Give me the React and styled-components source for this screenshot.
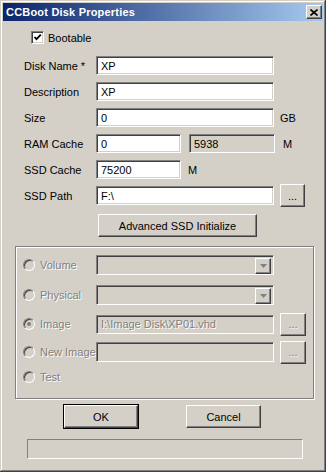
import React from 'react'
import styled, { createGlobalStyle, css } from 'styled-components'

const Global = createGlobalStyle`
  html, body { margin:0; padding:0; background:#d4d0c8; }
  body { font-family:"Liberation Sans", Arial, sans-serif; font-size:11px; color:#000; }
`

const raised = css`
  border:1px solid;
  border-color:#fff #404040 #404040 #fff;
  box-shadow:inset -1px -1px #808080, inset 1px 1px #d4d0c8;
`
const sunken = css`
  border:1px solid;
  border-color:#808080 #fff #fff #808080;
  box-shadow:inset 1px 1px #404040, inset -1px -1px #d4d0c8;
`
const disabledText = css`
  color:#808080;
  text-shadow:1px 1px #fff;
`

const Window = styled.div`
  width:326px;
  height:472px;
  box-sizing:border-box;
  background:#d4d0c8;
  box-shadow:inset -1px -1px #404040, inset 1px 1px #d4d0c8, inset -2px -2px #808080, inset 2px 2px #fff;
  display:flex;
  flex-direction:column;
  overflow:hidden;
`
const TitleBar = styled.div`
  margin:3px 3px 0;
  height:18px;
  background:linear-gradient(to right,#0a246a,#a6caf0);
  display:flex;
  align-items:center;
  justify-content:space-between;
  padding:0 1px 0 3px;
  h1{
    margin:0;
    color:#fff;
    font-size:11px;
    font-weight:bold;
    letter-spacing:0.2px;
  }
`
const CloseBtn = styled.div`
  ${raised};
  width:16px;
  height:14px;
  box-sizing:border-box;
  background:#d4d0c8;
  display:flex;
  align-items:center;
  justify-content:center;
`
const CheckRow = styled.div`
  margin:10px 0 0 31px;
  display:flex;
  align-items:center;
  gap:4px;
  height:13px;
`
const CheckBox = styled.span`
  ${sunken};
  width:13px;
  height:13px;
  box-sizing:border-box;
  background:#fff;
  display:flex;
  align-items:center;
  justify-content:center;
`
const Form = styled.div`
  margin-top:12px;
  display:flex;
  flex-direction:column;
  gap:7px;
`
const Row = styled.div`
  display:flex;
  align-items:center;
  height:19px;
  padding-left:${p => p.$indent || 24}px;
  margin-top:${p => p.$top || 0}px;
`
const Label = styled.span`
  width:${p => p.$w || 72}px;
  flex:none;
  ${p => p.$disabled && disabledText};
`
const Field = styled.div`
  ${sunken};
  box-sizing:border-box;
  width:${p => p.$w || 178}px;
  height:${p => p.$h || 19}px;
  background:${p => p.$gray ? '#d4d0c8' : '#fff'};
  padding:0 4px;
  display:flex;
  align-items:center;
  flex:none;
  position:relative;
  ${p => p.$disabled && disabledText};
`
const Unit = styled.span`
  margin-left:${p => p.$gap}px;
`
const Button = styled.div`
  ${raised};
  box-sizing:border-box;
  width:${p => p.$w}px;
  height:${p => p.$h || 23}px;
  margin-left:${p => p.$ml || 0}px;
  background:#d4d0c8;
  display:flex;
  align-items:center;
  justify-content:center;
  flex:none;
  ${p => p.$disabled && disabledText};
  ${p => p.$default && css`
    outline:1px solid #000;
    outline-offset:0;
  `}
`
const Group = styled.div`
  margin:9px 0 0 15px;
  width:299px;
  height:153px;
  box-sizing:border-box;
  border:1px solid #808080;
  box-shadow:1px 1px #fff, inset 1px 1px #fff;
  padding-top:8px;
  display:flex;
  flex-direction:column;
`
const RadioRow = styled(Row)`
  padding-left:7px;
  height:20px;
`
const Radio = styled.span`
  width:12px;
  height:12px;
  box-sizing:border-box;
  border-radius:50%;
  border:1px solid;
  border-color:#808080 #fff #fff #808080;
  box-shadow:inset 1px 1px #404040, inset -1px -1px #d4d0c8;
  background:#d4d0c8;
  margin-right:5px;
  flex:none;
  display:flex;
  align-items:center;
  justify-content:center;
  &::after{
    content:'';
    width:4px;
    height:4px;
    border-radius:50%;
    background:${p => p.$checked ? '#808080' : 'transparent'};
  }
`
const ComboBtn = styled.div`
  ${raised};
  position:absolute;
  right:2px;
  top:2px;
  width:16px;
  height:16px;
  box-sizing:border-box;
  background:#d4d0c8;
  display:flex;
  align-items:center;
  justify-content:center;
`
const Buttons = styled.div`
  display:flex;
  margin:6px 0 0 64px;
  gap:48px;
`
const Status = styled.div`
  margin:11px 0 0 27px;
  width:276px;
  height:20px;
  box-sizing:border-box;
  border:1px solid;
  border-color:#808080 #fff #fff #808080;
`

const Combo = () => (
  <Field $gray $disabled $h={20}>
    <ComboBtn>
      <svg width="7" height="4" viewBox="0 0 7 4"><path d="M0 0h7L3.5 4z" fill="#808080" /></svg>
    </ComboBtn>
  </Field>
)

export default function App() {
  return (
    <Window>
      <Global />
      <TitleBar>
        <h1>CCBoot Disk Properties</h1>
        <CloseBtn>
          <svg width="8" height="7" viewBox="0 0 8 7">
            <path d="M0.5 0.5L7.5 6.5M7.5 0.5L0.5 6.5" stroke="#000" strokeWidth="1.6" />
          </svg>
        </CloseBtn>
      </TitleBar>

      <CheckRow>
        <CheckBox>
          <svg width="9" height="9" viewBox="0 0 9 9">
            <path d="M1.5 4l2 2.2L7.8 1.6" stroke="#000" strokeWidth="1.8" fill="none" />
          </svg>
        </CheckBox>
        <span>Bootable</span>
      </CheckRow>

      <Form>
        <Row><Label>Disk Name *</Label><Field>XP</Field></Row>
        <Row><Label>Description</Label><Field>XP</Field></Row>
        <Row><Label>Size</Label><Field>0</Field><Unit $gap={6}>GB</Unit></Row>
        <Row>
          <Label>RAM Cache</Label>
          <Field $w={85}>0</Field>
          <Field $w={86} $gray style={{ marginLeft: 8 }}>5938</Field>
          <Unit $gap={8}>M</Unit>
        </Row>
        <Row><Label>SSD Cache</Label><Field $w={85}>75200</Field><Unit $gap={7}>M</Unit></Row>
        <Row>
          <Label>SSD Path</Label>
          <Field>F:\</Field>
          <Button $w={25} $ml={6}>...</Button>
        </Row>
      </Form>

      <Row $indent={98} $top={9} style={{ height: 23 }}>
        <Button $w={159}>Advanced SSD Initialize</Button>
      </Row>

      <Group>
        <RadioRow><Radio /><Label $w={56} $disabled>Volume</Label><Combo /></RadioRow>
        <RadioRow $top={10}><Radio /><Label $w={56} $disabled>Physical</Label><Combo /></RadioRow>
        <RadioRow $top={9}>
          <Radio $checked /><Label $w={56} $disabled>Image</Label>
          <Field $gray $disabled>I:\Image Disk\XP01.vhd</Field>
          <Button $w={26} $ml={6} $disabled>...</Button>
        </RadioRow>
        <RadioRow $top={8}>
          <Radio /><Label $w={56} $disabled>New Image</Label>
          <Field $gray $disabled $h={20} />
          <Button $w={26} $ml={6} $disabled>...</Button>
        </RadioRow>
        <RadioRow $top={5}><Radio /><Label $disabled>Test</Label></RadioRow>
      </Group>

      <Buttons>
        <Button $w={74} $default>OK</Button>
        <Button $w={75}>Cancel</Button>
      </Buttons>

      <Status />
    </Window>
  )
}
